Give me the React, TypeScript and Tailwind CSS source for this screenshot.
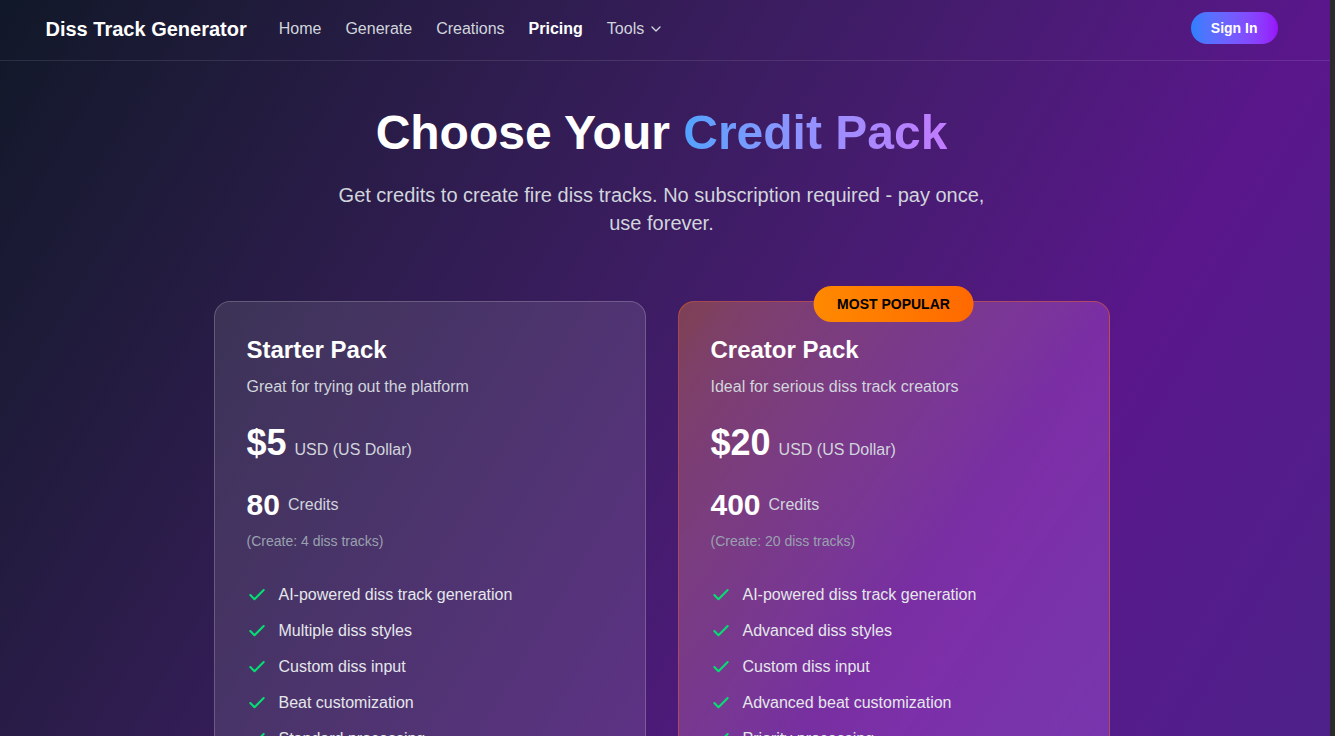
import { Check, ChevronDown } from 'lucide-react';

const packs = [
  {
    name: 'Starter Pack',
    desc: 'Great for trying out the platform',
    price: 5,
    credits: 80,
    tracks: 4,
    popular: false,
    features: [
      'AI-powered diss track generation',
      'Multiple diss styles',
      'Custom diss input',
      'Beat customization',
      'Standard processing',
      'MP3 downloads',
    ],
  },
  {
    name: 'Creator Pack',
    desc: 'Ideal for serious diss track creators',
    price: 20,
    credits: 400,
    tracks: 20,
    popular: true,
    features: [
      'AI-powered diss track generation',
      'Advanced diss styles',
      'Custom diss input',
      'Advanced beat customization',
      'Priority processing',
      'MP3 downloads',
    ],
  },
];

const faqs = [
  ['How do credits work?', 'Each diss track costs 20 credits. Credits never expire, so you can use them whenever you want.'],
  ['Is this a subscription?', 'No. You pay once for a credit pack and keep your credits forever.'],
  ['Can I buy more credits later?', 'Yes, you can top up at any time by purchasing another pack.'],
  ['What payment methods are accepted?', 'We accept all major credit and debit cards through our secure checkout.'],
];

export default function App() {
  return (
    <div className="h-screen overflow-hidden border-r-[5px] border-[#2b2b2b] font-['Liberation_Sans',Arial,sans-serif]">
      <div className="min-h-[2230px] bg-gradient-to-br from-gray-900 via-purple-900 to-indigo-900 text-white">
        {/* header */}
        <header className="border-b border-white/10 pr-[7px]">
          <div className="max-w-7xl mx-auto px-6 pt-3 pb-4 flex items-center justify-between">
            <div className="flex items-center pt-px">
              <span className="text-xl font-bold text-white">Diss Track Generator</span>
              <nav className="ml-8 flex items-center gap-6 text-base text-gray-300">
                <a>Home</a>
                <a>Generate</a>
                <a>Creations</a>
                <a className="font-bold text-white">Pricing</a>
                <a className="flex items-center gap-1">
                  Tools
                  <ChevronDown size={16} />
                </a>
              </nav>
            </div>
            <button className="h-8 px-5 rounded-full bg-gradient-to-r from-blue-500 to-purple-600 text-sm font-semibold text-white">
              Sign In
            </button>
          </div>
        </header>

        <div className="pr-[7px]">
          <main className="max-w-7xl mx-auto px-6 pt-12 pb-20">
            <div className="text-center mb-16">
              <h1 className="text-5xl leading-none font-bold mb-6">
                Choose Your{' '}
                <span className="bg-gradient-to-r from-blue-400 to-purple-400 bg-clip-text text-transparent">
                  Credit Pack
                </span>
              </h1>
              <p className="text-xl text-gray-300 max-w-2xl mx-auto">
                Get credits to create fire diss tracks. No subscription required - pay once, use forever.
              </p>
            </div>

            <div className="max-w-4xl mx-auto grid grid-cols-2 gap-8">
              {packs.map(pack => (
                <div
                  key={pack.name}
                  className={
                    pack.popular
                      ? 'relative rounded-2xl border border-orange-500/40 bg-white/10 bg-gradient-to-br from-orange-500/25 via-fuchsia-500/15 to-purple-500/25 p-8'
                      : 'relative rounded-2xl border border-white/20 bg-white/10 p-8'
                  }
                >
                  {pack.popular && (
                    <div className="absolute -top-4 left-1/2 -translate-x-1/2 px-6 py-2 rounded-full bg-gradient-to-r from-orange-400 to-orange-500 text-sm font-bold text-black whitespace-nowrap">
                      MOST POPULAR
                    </div>
                  )}
                  <h3 className="text-2xl font-bold mb-2">{pack.name}</h3>
                  <p className="text-gray-300 pt-px">{pack.desc}</p>

                  <div className="mt-6 flex items-baseline">
                    <span className="text-4xl font-bold">${pack.price}</span>
                    <span className="ml-2 text-gray-300">USD (US Dollar)</span>
                  </div>
                  <div className="mt-6 flex items-center">
                    <span className="text-3xl font-bold">{pack.credits}</span>
                    <span className="ml-2 text-gray-300">Credits</span>
                  </div>
                  <p className="mt-2 text-sm text-gray-400">(Create: {pack.tracks} diss tracks)</p>

                  <ul className="mt-8 space-y-3">
                    {pack.features.map(f => (
                      <li key={f} className="flex items-center gap-3 text-gray-200">
                        <Check size={20} strokeWidth={2.5} className="text-green-400 shrink-0" />
                        {f}
                      </li>
                    ))}
                  </ul>

                  <button
                    className={
                      pack.popular
                        ? 'mt-8 w-full py-3 rounded-xl bg-gradient-to-r from-orange-400 to-orange-500 font-bold text-black'
                        : 'mt-8 w-full py-3 rounded-xl bg-gradient-to-r from-blue-500 to-purple-600 font-bold text-white'
                    }
                  >
                    Buy {pack.name}
                  </button>
                </div>
              ))}
            </div>

            <section className="max-w-3xl mx-auto mt-24">
              <h2 className="text-3xl font-bold text-center mb-10">Frequently Asked Questions</h2>
              <div className="space-y-4">
                {faqs.map(([q, a]) => (
                  <div key={q} className="rounded-xl border border-white/10 bg-white/5 p-6">
                    <h4 className="text-lg font-semibold mb-2">{q}</h4>
                    <p className="text-gray-300">{a}</p>
                  </div>
                ))}
              </div>
            </section>
          </main>

          <footer className="border-t border-white/10 py-8 text-center text-sm text-gray-400">
            © 2025 Diss Track Generator. All rights reserved.
          </footer>
        </div>
      </div>
    </div>
  );
}
